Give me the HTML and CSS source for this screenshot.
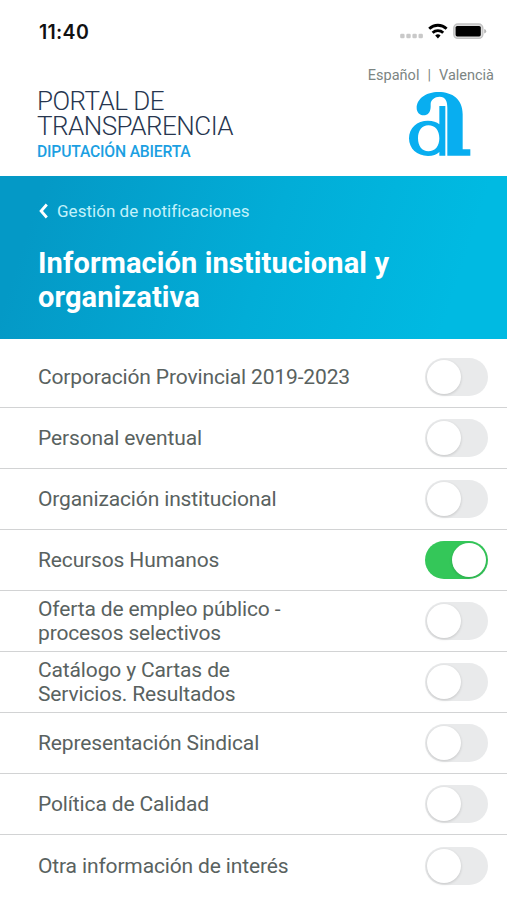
FILE: index.html
```html
<!DOCTYPE html>
<html lang="es">
<head>
<meta charset="utf-8">
<title>Portal de Transparencia</title>
<link rel="stylesheet" href="styles.css">
</head>
<body>
<div class="status">
  <span class="time">11:40</span>
  <svg class="status-icons" width="88" height="20" viewBox="0 0 88 20">
    <g fill="#c9c9c9"><rect x="1.2" y="13.8" width="4.4" height="4.4" rx="1.3"/><rect x="7.3" y="13.8" width="4.4" height="4.4" rx="1.3"/><rect x="13.4" y="13.8" width="4.4" height="4.4" rx="1.3"/><rect x="19.5" y="13.8" width="4.4" height="4.4" rx="1.3"/></g>
    <g fill="none" stroke="#000" stroke-width="2.9"><path d="M30.2 8.7a12.8 12.8 0 0 1 17.4 0"/><path d="M33.6 12.7a7.8 7.8 0 0 1 10.6 0"/></g>
    <path d="M36.2 15.5a4.2 4.2 0 0 1 5.4 0l-2.7 3z"/>
    <rect x="54.8" y="4" width="29" height="14.4" rx="4" fill="#ddd" stroke="#c2c2c2" stroke-width="1.4"/>
    <rect x="56.6" y="6" width="25.2" height="10.4" rx="1.6"/>
    <path d="M85.2 9q2 .5 2 2.3t-2 2.3z" fill="#b5b5b5"/>
  </svg>
</div>
<header class="header">
  <div class="brand">
    <div class="brand-name">PORTAL DE<br>TRANSPARENCIA</div>
    <span class="brand-sub">DIPUTACIÓN ABIERTA</span>
  </div>
  <div class="side">
    <nav class="langs"><span>Español</span><span>|</span><span>Valencià</span></nav>
    <svg class="logo" width="64" height="66" viewBox="39 18 192 198" fill="#08aef0">
      <path d="M107 66C106 83 98 91 86 91C73 91 65 81 65 69C65 41 94 21 130 21C173 21 203 43 203 88V193H226V212H157V68C157 47 151 35 134 35C119 35 107 45 107 57Z"/>
      <path fill-rule="evenodd" d="M133 63H151V212H133V201Q121 213 99 213C66 213 42 191 42 160C42 129 66 107 99 107Q121 107 133 118ZM100 121C81 121 69 137 69 160C69 183 81 199 100 199C121 199 133 183 133 160C133 137 121 121 100 121Z"/>
    </svg>
  </div>
</header>
<section class="hero">
  <a class="back"><svg width="10" height="16" viewBox="0 0 10 16" fill="none" stroke="#fff" stroke-width="2.8"><path d="M8.8 1.5L3.1 8l5.7 6.5"/></svg><span>Gestión de notificaciones</span></a>
  <h1>Información institucional y<br>organizativa</h1>
</section>
<ul class="list">
  <li><span>Corporación Provincial 2019-2023</span><i class="toggle"></i></li>
  <li><span>Personal eventual</span><i class="toggle"></i></li>
  <li><span>Organización institucional</span><i class="toggle"></i></li>
  <li><span>Recursos Humanos</span><i class="toggle on"></i></li>
  <li><span>Oferta de empleo público -<br>procesos selectivos</span><i class="toggle"></i></li>
  <li><span>Catálogo y Cartas de<br>Servicios. Resultados</span><i class="toggle"></i></li>
  <li><span>Representación Sindical</span><i class="toggle"></i></li>
  <li><span>Política de Calidad</span><i class="toggle"></i></li>
  <li><span>Otra información de interés</span><i class="toggle"></i></li>
</ul>
</body>
</html>
```
FILE: styles.css
```css
* { box-sizing: border-box; }
body { margin: 0; width: 507px; height: 900px; overflow: hidden; background: #fff; font-family: Roboto, sans-serif; color: #59625f; }
.status { display: flex; justify-content: space-between; height: 62px; padding: 20px 20px 0 39px; }
.time { font: 600 19.5px/24px Inter, sans-serif; color: #111; letter-spacing: .3px; }
.header { display: flex; justify-content: space-between; height: 114px; padding: 0 13px 0 37px; }
.brand { display: flex; flex-direction: column; padding-top: 27px; white-space: nowrap; }
.brand-name { font-size: 26px; line-height: 25px; font-weight: 300; color: #27364f; letter-spacing: -.52px; }
.brand-sub { margin-top: 5px; font-size: 15.7px; line-height: 16px; font-weight: 500; color: #1c9fe2; letter-spacing: -.18px; }
.side { display: flex; flex-direction: column; align-items: flex-end; }
.langs { display: flex; gap: 8px; padding-top: 4px; font-size: 14.5px; line-height: 19px; color: #7c8583; white-space: nowrap; }
.logo { margin: 6px 22px 0 0; }
.hero { height: 163px; padding: 25px 37px 0 38px; color: #fff; background: linear-gradient(108deg, #0499c6 8%, #02add7 52%, #00bae2 88%); }
.back { display: flex; align-items: center; gap: 9px; height: 20px; font-size: 17px; line-height: 20px; color: #c3f2fb; letter-spacing: .02px; }
.hero h1 { margin: 25px 0 0; font-size: 29px; line-height: 34px; font-weight: 700; white-space: nowrap; letter-spacing: .11px; }
.list { list-style: none; margin: 0; padding: 7.6px 0 0; }
.list li { display: flex; align-items: center; justify-content: space-between; height: 61.1px; padding: 0 19px 0 38px; border-bottom: 1.5px solid #d2d3d4; font-size: 21px; line-height: 24px; letter-spacing: -.14px; white-space: nowrap; }
.list li:last-child { border-bottom: 0; }
.toggle { width: 63px; height: 38px; padding: 2px; border-radius: 19px; background: #e9eaeb; display: flex; }
.toggle::after { content: ""; width: 34px; height: 34px; border-radius: 50%; background: #fff; box-shadow: 0 1px 3px rgba(0,0,0,.16); }
.toggle.on { justify-content: flex-end; background: #34c759; }
```
